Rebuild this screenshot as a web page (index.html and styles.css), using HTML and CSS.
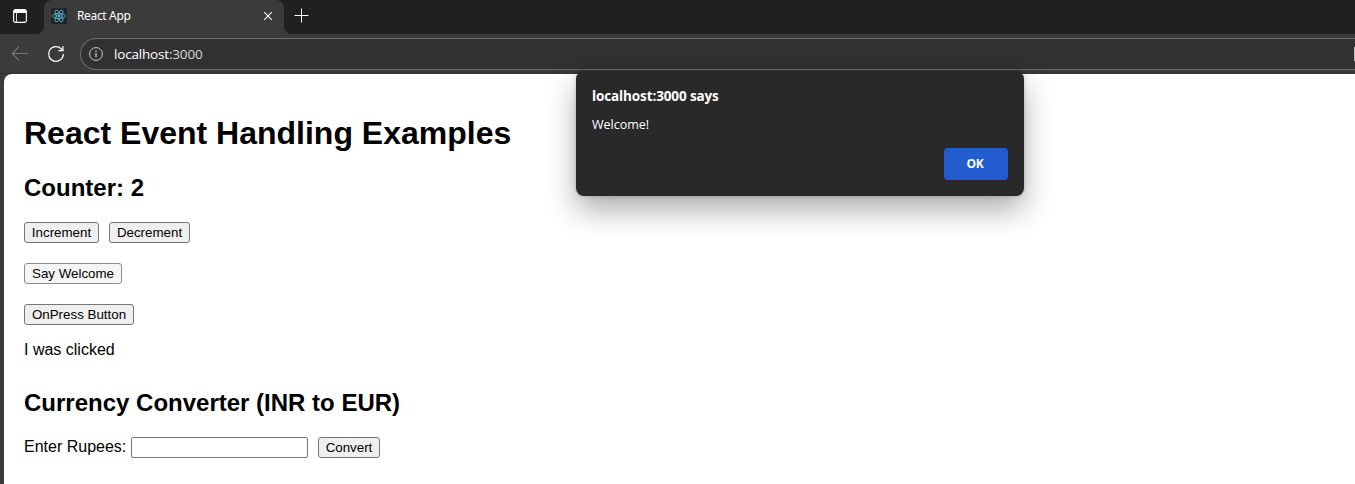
FILE: index.html
```html
<!DOCTYPE html>
<html lang="en">
<head>
<meta charset="utf-8">
<title>React App</title>
<link rel="stylesheet" href="styles.css">
</head>
<body>
<div class="browser">
  <header class="tabstrip">
    <div class="tab-actions">
      <svg width="16" height="16" viewBox="0 0 16 16"><rect x="1.6" y="1.6" width="12.8" height="12.8" rx="2.2" fill="none" stroke="#fff" stroke-width="1.1"/><path d="M2 5V3.2Q2 2 3.2 2h9.6Q14 2 14 3.2V5z" fill="#fff"/><path d="M4.5 5v9" stroke="#ddd"/></svg>
    </div>
    <div class="tab">
      <svg class="favicon" width="16" height="16" viewBox="0 0 16 16"><rect width="16" height="16" rx="1.5" fill="#202327"/><g fill="none" stroke="#58bdd7" stroke-width=".8"><ellipse cx="8" cy="8" rx="6.6" ry="2.5"/><ellipse cx="8" cy="8" rx="6.6" ry="2.5" transform="rotate(60 8 8)"/><ellipse cx="8" cy="8" rx="6.6" ry="2.5" transform="rotate(120 8 8)"/></g><circle cx="8" cy="8" r="1.4" fill="#58bdd7"/></svg>
      <span class="tab-title">React App</span>
      <svg class="close" width="10" height="10" viewBox="0 0 10 10" fill="none" stroke="#fff" stroke-width="1.1"><path d="M1.2 1.2l7.6 7.6M8.8 1.2L1.2 8.8"/></svg>
    </div>
    <svg class="new-tab" width="15" height="15" viewBox="0 0 15 15" fill="none" stroke="#fff"><path d="M.5 7.5h14M7.5.5v14"/></svg>
  </header>
  <nav class="toolbar">
    <svg class="back" width="18" height="16" viewBox="0 0 18 16" fill="none" stroke="#777" stroke-width="1.1"><path d="M17 7.5H1.5M8 .7L1.2 7.5 8 14.3"/></svg>
    <svg class="reload" width="18" height="18" viewBox="0 0 18 18" fill="none" stroke="#fff" stroke-width="1.2"><path d="M16.4 9A7.4 7.4 0 1 1 14.2 3.7L16 5.5M16 1v4.6h-4.6"/></svg>
    <div class="address">
      <svg width="14" height="14" viewBox="0 0 14 14" fill="none" stroke="#ccc"><circle cx="7" cy="7" r="6.4"/><path d="M7 6v4.2M7 3.6v1.3" stroke-width="1.3"/></svg>
      <span class="url">localhost<span class="port">:3000</span></span>
      <i class="edge-mark"></i>
    </div>
  </nav>
  <main class="page">
    <h1>React Event Handling Examples</h1>
    <h2>Counter: 2</h2>
    <div class="row"><button class="increment">Increment</button><button class="decrement">Decrement</button></div>
    <div class="row"><button class="welcome">Say Welcome</button></div>
    <div class="row"><button class="press">OnPress Button</button></div>
    <p>I was clicked</p>
    <h2 class="converter">Currency Converter (INR to EUR)</h2>
    <div class="row"><label for="rupees">Enter Rupees:</label><input id="rupees" type="text"><button class="convert">Convert</button></div>
  </main>
</div>
<section class="dialog" role="alertdialog">
  <div class="dialog-title">localhost:3000 says</div>
  <div class="dialog-message">Welcome!</div>
  <button class="ok">OK</button>
</section>
</body>
</html>
```
FILE: styles.css
```css
* { box-sizing: border-box; }
body { margin: 0; overflow: hidden; background: #3b3b3b; color: #000; font-family: "Liberation Sans", Arial, sans-serif; }
svg { display: block; flex: none; }
.browser { height: 484px; display: flex; flex-direction: column; background: #3b3b3b; }
.tabstrip { height: 34px; flex: none; display: flex; background: radial-gradient(circle at 8px 0, #202020 7.5px, #3b3b3b 8.5px) 284px 26px / 8px 8px no-repeat, #202020; font-family: "Noto Sans", sans-serif; }
.tab-actions { width: 44px; padding: 8px 0 0 12px; background: radial-gradient(circle at 0 0, #202020 7.5px, #3b3b3b 8.5px) 36px 26px / 8px 8px no-repeat; }
.tab { width: 240px; display: flex; align-items: center; padding: 0 11px 2px 7px; background: #3b3b3b; border-radius: 8px 8px 0 0; }
.tab-title { margin-left: 10px; color: #fff; font-size: 12px; letter-spacing: -.35px; line-height: 16px; }
.close { margin-left: auto; }
.new-tab { margin: 8px 0 0 10px; }
.toolbar { height: 40px; flex: none; display: flex; background: linear-gradient(#3b3b3b 37px, #333); }
.back { margin: 12px 0 0 11px; }
.reload { margin: 11px 0 0 18px; }
.address { height: 32px; margin: 4px 0 0 15px; flex: 1; display: flex; align-items: center; padding-left: 8px; border: 1px solid #6d6d6d; border-right: 0; border-radius: 16px 0 0 16px; background: #313131; }
.url { margin-left: 11px; color: #fff; font: 13.5px/18px "Open Sans", sans-serif; letter-spacing: -.18px; }
.port { color: #d8d8d8; }
.edge-mark { width: 1px; height: 14px; margin-left: auto; background: #bbb; }
.page { flex: 1; margin-left: 4px; padding: 20px; background: #fff; border-top-left-radius: 8px; }
h1 { margin: 21px 0 0; font-size: 32px; line-height: 36px; }
h2 { margin: 23px 0 20px; font-size: 24px; line-height: 28px; }
.row { height: 21px; margin-bottom: 20px; display: flex; gap: 10px; }
.page button { height: 21px; padding: 0; border: 1px solid #767676; border-radius: 3px; background: #efefef; color: #000; font: 13.333px/17px "Liberation Sans", Arial, sans-serif; }
.increment { width: 75px; }
.decrement { width: 81px; }
.page .welcome { width: 98px; background: #f5f5f5; border-color: #8d8d8d; }
.press { width: 110px; }
.convert { width: 62px; }
p { margin: -4px 0 0; font-size: 16px; line-height: 18px; }
.converter { margin-top: 30px; }
label { width: 102px; font-size: 16px; line-height: 20px; white-space: nowrap; }
input { width: 177px; height: 21px; margin-left: -5px; padding: 1px 2px; border: 1px solid #767676; border-radius: 2px; background: #fff; }
.dialog { position: absolute; left: 576px; top: 71px; width: 448px; height: 125px; display: flex; flex-direction: column; padding: 16px; border-radius: 8px; background: #292929; color: #fff; font: 13px/20px "Open Sans", sans-serif; box-shadow: 0 14px 30px rgba(0,0,0,.32), 0 0 4px rgba(0,0,0,.2); }
.dialog-title { font-size: 13.5px; font-weight: 700; letter-spacing: -.12px; line-height: 19px; }
.dialog-message { margin-top: 9px; font-size: 12.5px; }
.ok { width: 64px; height: 32px; margin: auto 0 0 auto; padding: 0 2px 0 0; border: 0; border-radius: 4px; background: #235ccf; color: #fff; font: 700 12px/16px "Open Sans", sans-serif; letter-spacing: -.3px; }
```
